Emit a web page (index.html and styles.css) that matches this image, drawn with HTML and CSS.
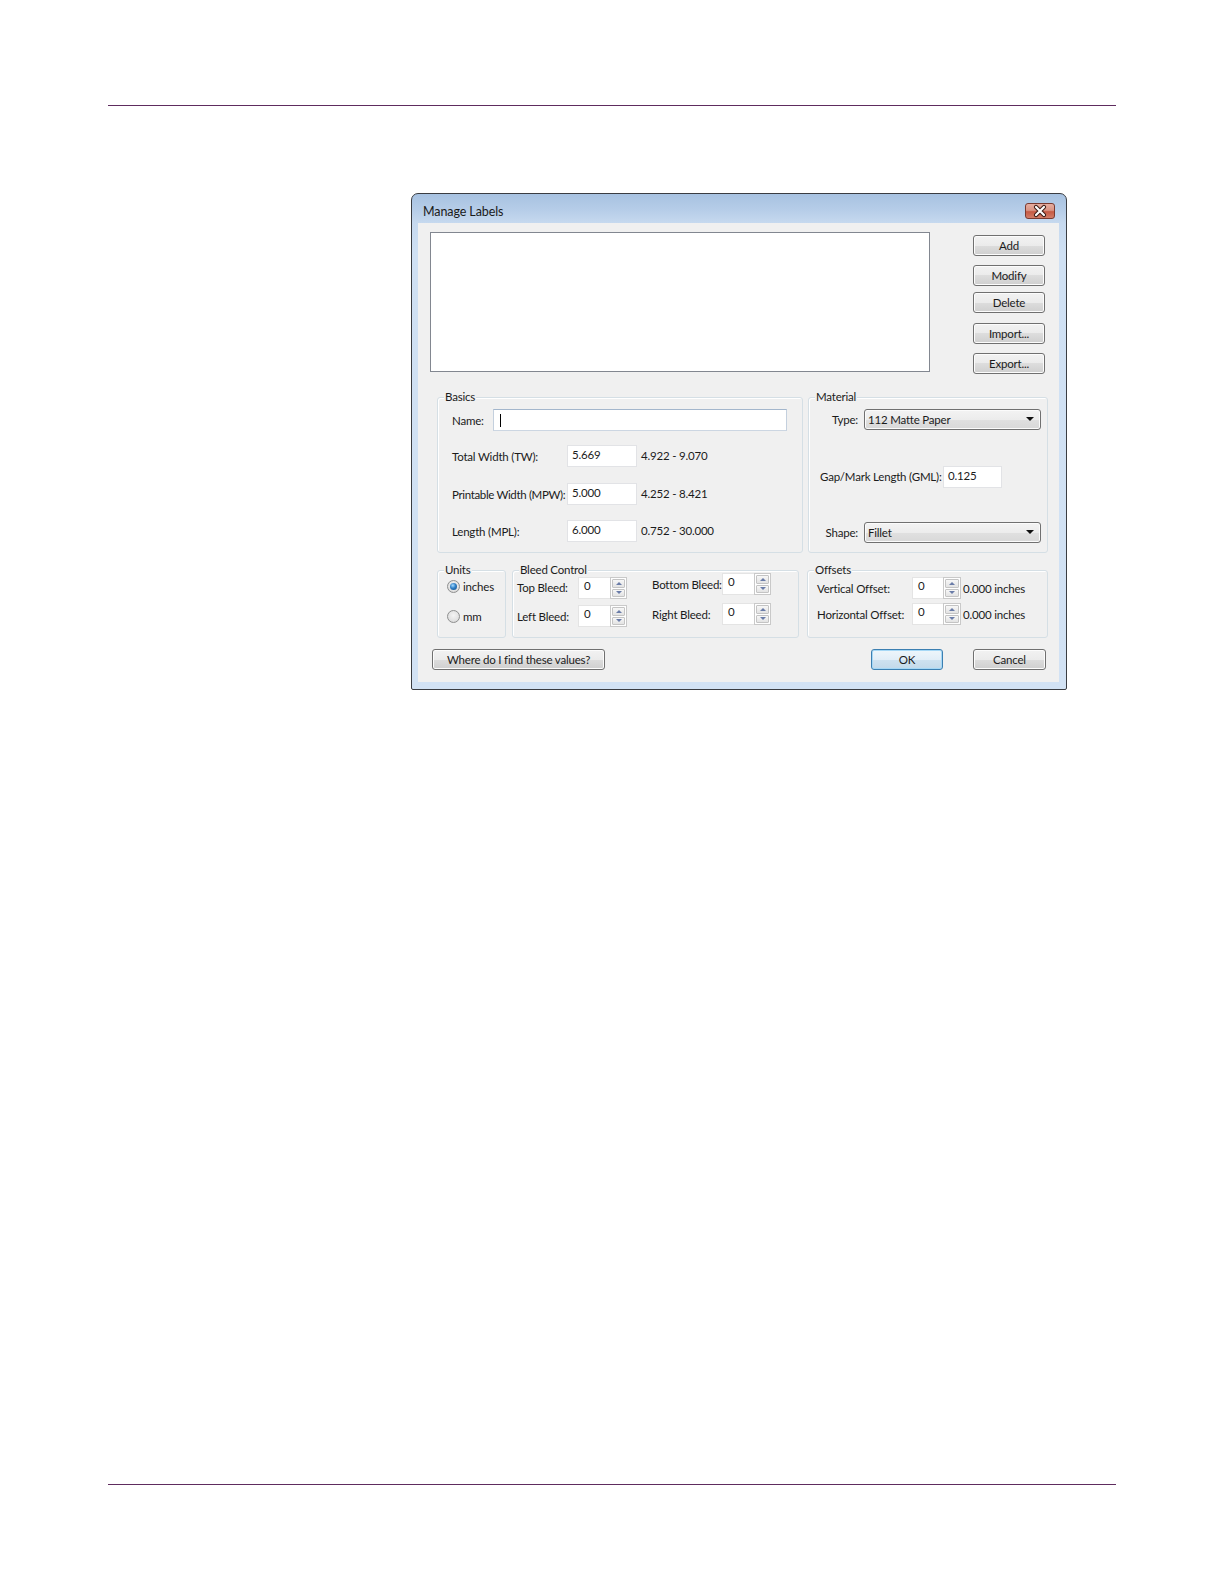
FILE: index.html
```html
<!DOCTYPE html>
<html>
<head>
<meta charset="utf-8">
<title>Manage Labels</title>
<link rel="stylesheet" href="styles.css">
</head>
<body>
<div class="rule rule-top"></div>
<div class="dialog">
  <div class="titlebar">
    <span class="title">Manage Labels</span>
    <span class="close">
      <svg width="30" height="16" viewBox="0 0 30 16">
        <path d="M11 4 L19 12 M19 4 L11 12" stroke="#3a1a14" stroke-width="4.2" stroke-linecap="round"/>
        <path d="M11 4 L19 12 M19 4 L11 12" stroke="#ffffff" stroke-width="2.2" stroke-linecap="round"/>
      </svg>
    </span>
  </div>
  <div class="client">
    <div class="toprow">
      <div class="listbox"></div>
      <div class="btncol">
        <div class="btn">Add</div>
        <div class="btn mt9">Modify</div>
        <div class="btn mt6">Delete</div>
        <div class="btn mt10">Import...</div>
        <div class="btn mt9">Export...</div>
      </div>
    </div>

    <div class="midrow">
      <div class="group basics">
        <span class="legend">Basics</span>
        <div class="row">
          <span class="lbl w41">Name:</span>
          <div class="field name-field"><span class="caret"></span></div>
        </div>
        <div class="row mt14">
          <span class="lbl w115">Total Width (TW):</span>
          <div class="field w70">5.669</div>
          <span class="range">4.922 - 9.070</span>
        </div>
        <div class="row mt16">
          <span class="lbl w115 tight">Printable Width (MPW):</span>
          <div class="field w70">5.000</div>
          <span class="range">4.252 - 8.421</span>
        </div>
        <div class="row mt15">
          <span class="lbl w115">Length (MPL):</span>
          <div class="field w70">6.000</div>
          <span class="range">0.752 - 30.000</span>
        </div>
      </div>

      <div class="group material">
        <span class="legend">Material</span>
        <div class="row r21">
          <span class="lbl w38 right">Type:</span>
          <div class="select">112 Matte Paper<span class="arrow"></span></div>
        </div>
        <div class="row mt36">
          <span class="lbl w123 up1">Gap/Mark Length (GML):</span>
          <div class="field w59">0.125</div>
        </div>
        <div class="row r21 mt34">
          <span class="lbl w38 right">Shape:</span>
          <div class="select">Fillet<span class="arrow"></span></div>
        </div>
      </div>
    </div>

    <div class="lowrow">
      <div class="group units">
        <span class="legend">Units</span>
        <div class="radio-row"><span class="radio checked"></span><span>inches</span></div>
        <div class="radio-row mt14"><span class="radio"></span><span>mm</span></div>
      </div>

      <div class="group bleed">
        <span class="legend">Bleed Control</span>
        <div class="bleed-row">
          <div class="cell mt4">
            <span class="lbl w61 up1">Top Bleed:</span>
            <div class="spinbox"><div class="num">0</div><div class="spin"><span class="up"></span><span class="down"></span></div></div>
          </div>
          <div class="cell ml25">
            <span class="lbl w70">Bottom Bleed:</span>
            <div class="spinbox"><div class="num">0</div><div class="spin"><span class="up"></span><span class="down"></span></div></div>
          </div>
        </div>
        <div class="bleed-row mt4">
          <div class="cell mt2">
            <span class="lbl w61">Left Bleed:</span>
            <div class="spinbox"><div class="num">0</div><div class="spin"><span class="up"></span><span class="down"></span></div></div>
          </div>
          <div class="cell ml25">
            <span class="lbl w70">Right Bleed:</span>
            <div class="spinbox"><div class="num">0</div><div class="spin"><span class="up"></span><span class="down"></span></div></div>
          </div>
        </div>
      </div>

      <div class="group offsets">
        <span class="legend">Offsets</span>
        <div class="cell">
          <span class="lbl w95">Vertical Offset:</span>
          <div class="spinbox"><div class="num n31">0</div><div class="spin s18"><span class="up"></span><span class="down"></span></div></div>
          <span class="unit">0.000 inches</span>
        </div>
        <div class="cell mt4">
          <span class="lbl w95">Horizontal Offset:</span>
          <div class="spinbox"><div class="num n31">0</div><div class="spin s18"><span class="up"></span><span class="down"></span></div></div>
          <span class="unit">0.000 inches</span>
        </div>
      </div>
    </div>

    <div class="btnrow">
      <div class="btn where">Where do I find these values?</div>
      <div class="btn default ok">OK</div>
      <div class="btn cancel">Cancel</div>
    </div>
  </div>
</div>
<div class="rule rule-bottom"></div>
</body>
</html>
```

FILE: styles.css
```css
* { box-sizing: border-box; }
html, body { margin: 0; padding: 0; background: #ffffff; }
body {
  width: 1224px;
  height: 1584px;
  font-family: Lato, "Noto Sans", "DejaVu Sans", sans-serif;
  font-size: 11.5px;
  letter-spacing: -0.2px;
  color: #1b1b1b;
  overflow: hidden;
}

.rule { height: 1px; width: 1008px; margin-left: 108px; background: #5e2c5e; }
.rule-top { margin-top: 105px; }
.rule-bottom { margin-top: 794px; }

/* dialog frame */
.dialog {
  margin: 87px 0 0 411px;
  width: 656px;
  height: 497px;
  border: 1px solid #3a3d42;
  border-radius: 7px 7px 2px 2px;
  background: linear-gradient(to bottom, #a7c2e1 0, #b6cde8 16px, #c6d9ef 29px, #cfe0f3 60px, #d2e2f4 100%);
  display: flex;
  flex-direction: column;
}
.titlebar {
  height: 29px;
  display: flex;
  align-items: flex-start;
  padding-left: 11px;
}
.title {
  margin-top: 10px;
  font-size: 12.5px;
  letter-spacing: -0.1px;
  line-height: 16px;
  color: #1a1a1a;
}
.close {
  margin-left: auto;
  margin-top: 9px;
  margin-right: 11px;
  width: 30px;
  height: 16px;
  border: 1px solid #7a3a30;
  border-radius: 3px;
  background: linear-gradient(to bottom, #e6ada0 0, #d99484 45%, #c65a44 55%, #d27d68 100%);
  display: flex;
  align-items: center;
  justify-content: center;
  overflow: hidden;
}
.close svg { display: block; flex: none; }

.client {
  margin: 0 7px 0 6px;
  height: 459px;
  background: #f0f0f0;
}

/* top row */
.toprow { display: flex; align-items: flex-start; height: 151px; padding-top: 9px; }
.listbox {
  margin-left: 12px;
  width: 500px;
  height: 140px;
  border: 1px solid #828790;
  background: #ffffff;
}
.btncol { margin-left: 43px; margin-top: 3px; display: flex; flex-direction: column; width: 72px; }

.btn {
  height: 21px;
  border: 1px solid #707070;
  border-radius: 3px;
  background: linear-gradient(to bottom, #f2f2f2 0, #ebebeb 50%, #dddddd 50%, #cfcfcf 100%);
  box-shadow: inset 0 0 0 1px #fcfcfc;
  display: flex;
  align-items: center;
  justify-content: center;
  line-height: 14px;
  color: #1b1b1b;
  white-space: nowrap;
}

/* groups */
.midrow { display: flex; margin-top: 23px; padding-left: 19px; }
.group {
  position: relative;
  border: 1px solid #d5dfe5;
  border-radius: 3px;
  box-shadow: inset 1px 1px 0 #ffffff;
}
.legend {
  position: absolute;
  top: -8px;
  left: 6px;
  padding: 0 1px;
  background: #f0f0f0;
  line-height: 14px;
}
.basics { width: 366px; height: 156px; padding: 11px 0 0 14px; }
.material { margin-left: 5px; width: 240px; height: 156px; padding: 11px 0 0 11px; }

.row { display: flex; align-items: center; height: 22px; }
.r21 { height: 21px; }
.lbl { flex: none; white-space: nowrap; }
.tight { letter-spacing: -0.35px; }
.up1 { margin-top: -2px; }
.right { text-align: right; margin-right: 6px; }
.w38 { width: 38px; }
.w41 { width: 41px; }
.w61 { width: 61px; }
.w70 { width: 70px; }
.w95 { width: 95px; }
.w115 { width: 115px; }
.w123 { width: 123px; }
.w59 { width: 59px; }

.field {
  height: 22px;
  border: 1px solid #e2e3e6;
  background: #ffffff;
  padding: 1px 4px;
  line-height: 16px;
  flex: none;
}
.name-field {
  width: 294px;
  border-color: #a3b6cc #c4d0de #ccd6e2 #c4d0de;
  display: flex;
  align-items: center;
  padding: 0 6px;
}
.caret { width: 1px; height: 13px; background: #000000; }
.range { margin-left: 4px; margin-top: -2px; white-space: nowrap; }

.select {
  position: relative;
  width: 177px;
  height: 21px;
  border: 1px solid #707070;
  border-radius: 3px;
  background: linear-gradient(to bottom, #f3f3f3 0, #ececec 50%, #e0e0e0 50%, #d8d8d8 100%);
  box-shadow: inset 0 0 0 1px #fbfbfb;
  padding: 0 3px;
  line-height: 19px;
  white-space: nowrap;
}
.arrow {
  position: absolute;
  right: 6px;
  top: 7px;
  width: 0;
  height: 0;
  border-left: 4px solid transparent;
  border-right: 4px solid transparent;
  border-top: 4px solid #111111;
}

/* lower row */
.lowrow { display: flex; margin-top: 17px; padding-left: 19px; }
.units { width: 69px; height: 68px; padding: 7px 0 0 9px; }
.bleed { margin-left: 6px; width: 287px; height: 68px; padding: 2px 0 0 4px; }
.offsets { margin-left: 8px; width: 241px; height: 68px; padding: 6px 0 0 9px; }

.radio-row { display: flex; align-items: center; height: 16px; gap: 3px; }
.radio {
  width: 13px;
  height: 13px;
  border-radius: 50%;
  border: 1px solid #8e8f8f;
  background: radial-gradient(circle at 50% 40%, #f4f4f4 0, #e2e2e2 60%, #cfcfcf 100%);
  flex: none;
  display: flex;
  align-items: center;
  justify-content: center;
}
.radio.checked::after {
  content: "";
  width: 7px;
  height: 7px;
  border-radius: 50%;
  background: radial-gradient(circle at 40% 35%, #a6dbff 0, #2f7fc6 45%, #144a82 100%);
}

.bleed-row { display: flex; align-items: flex-start; }
.cell { display: flex; align-items: center; height: 22px; }
.spinbox { display: flex; height: 22px; flex: none; }
.num {
  width: 32px;
  height: 22px;
  background: #ffffff;
  border: 1px solid #e4e4e4;
  border-right: none;
  padding: 0 5px;
  line-height: 16px;
}
.n31 { width: 31px; }
.spin {
  width: 17px;
  height: 22px;
  display: flex;
  flex-direction: column;
  border: 1px solid #c9c9c9;
  background: #ffffff;
  padding: 1px;
  gap: 1px;
}
.s18 { width: 18px; }
.spin span {
  flex: 1;
  border: 1px solid #c4c4c4;
  border-radius: 1px;
  background: linear-gradient(to bottom, #f7f7f7, #e3e3e3);
  display: flex;
  align-items: center;
  justify-content: center;
}
.spin .up::after {
  content: "";
  width: 0; height: 0;
  border-left: 3px solid transparent;
  border-right: 3px solid transparent;
  border-bottom: 3px solid #6a7ca8;
}
.spin .down::after {
  content: "";
  width: 0; height: 0;
  border-left: 3px solid transparent;
  border-right: 3px solid transparent;
  border-top: 3px solid #6a7ca8;
}
.unit { margin-left: 2px; white-space: nowrap; }

/* bottom buttons */
.btnrow { display: flex; margin-top: 11px; padding-left: 14px; }
.where { width: 173px; }
.ok { width: 72px; margin-left: 266px; }
.cancel { width: 73px; margin-left: 30px; }
.default {
  border-color: #3c7fb1;
  box-shadow: inset 0 0 0 1px #a6d8f6;
  background: linear-gradient(to bottom, #eef6fb 0, #e2eef7 50%, #cfe2f0 50%, #c2d9ea 100%);
}

/* spacing helpers */
.mt2 { margin-top: 2px; }
.mt4 { margin-top: 4px; }
.mt6 { margin-top: 6px; }
.mt9 { margin-top: 9px; }
.mt10 { margin-top: 10px; }
.mt14 { margin-top: 14px; }
.mt15 { margin-top: 15px; }
.mt16 { margin-top: 16px; }
.mt34 { margin-top: 34px; }
.mt36 { margin-top: 36px; }
.ml25 { margin-left: 25px; }
```
